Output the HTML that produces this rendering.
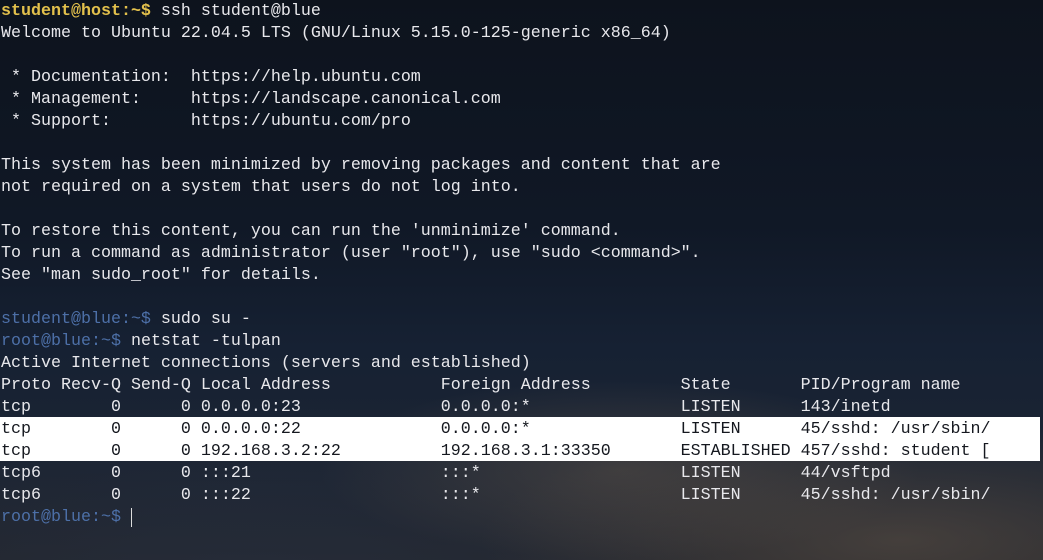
<!DOCTYPE html>
<html><head><meta charset="utf-8"><style>
html,body{margin:0;padding:0}
body{width:1043px;height:560px;overflow:hidden;position:relative;
background:
radial-gradient(ellipse 300px 90px at 620px 470px, rgba(110,95,80,.4), transparent),
radial-gradient(ellipse 420px 120px at 900px 540px, rgba(120,100,80,.4), transparent),
radial-gradient(ellipse 500px 200px at 250px 600px, rgba(40,50,70,.5), transparent),
linear-gradient(180deg,#0d131d 0%,#101826 40%,#162133 62%,#1b2433 80%,#23262d 100%);}
pre{margin:0;position:absolute;top:1px;left:1px;font-family:"Liberation Mono",monospace;font-size:16.67px;line-height:22px;color:#e8e8ec;white-space:pre}
.y{color:#e2c04c;font-weight:bold}.b{color:#4d70a8}
.hl{position:absolute;left:0;width:1040px;top:417px;height:44px;background:#fff}
.d{color:#15181f}
</style></head><body>
<div class="hl"></div>
<pre><span class="y">student@host:~$</span> ssh student@blue
Welcome to Ubuntu 22.04.5 LTS (GNU/Linux 5.15.0-125-generic x86_64)

 * Documentation:  https://help.ubuntu.com
 * Management:     https://landscape.canonical.com
 * Support:        https://ubuntu.com/pro

This system has been minimized by removing packages and content that are
not required on a system that users do not log into.

To restore this content, you can run the 'unminimize' command.
To run a command as administrator (user "root"), use "sudo &lt;command&gt;".
See "man sudo_root" for details.

<span class="b">student@blue:~$</span> sudo su -
<span class="b">root@blue:~$</span> netstat -tulpan
Active Internet connections (servers and established)
Proto Recv-Q Send-Q Local Address           Foreign Address         State       PID/Program name
tcp        0      0 0.0.0.0:23              0.0.0.0:*               LISTEN      143/inetd
<span class="d">tcp        0      0 0.0.0.0:22              0.0.0.0:*               LISTEN      45/sshd: /usr/sbin/</span>
<span class="d">tcp        0      0 192.168.3.2:22          192.168.3.1:33350       ESTABLISHED 457/sshd: student [</span>
tcp6       0      0 :::21                   :::*                    LISTEN      44/vsftpd
tcp6       0      0 :::22                   :::*                    LISTEN      45/sshd: /usr/sbin/
<span class="b">root@blue:~$</span> <span style="border-left:1px solid #ddd"> </span></pre>
</body></html>
